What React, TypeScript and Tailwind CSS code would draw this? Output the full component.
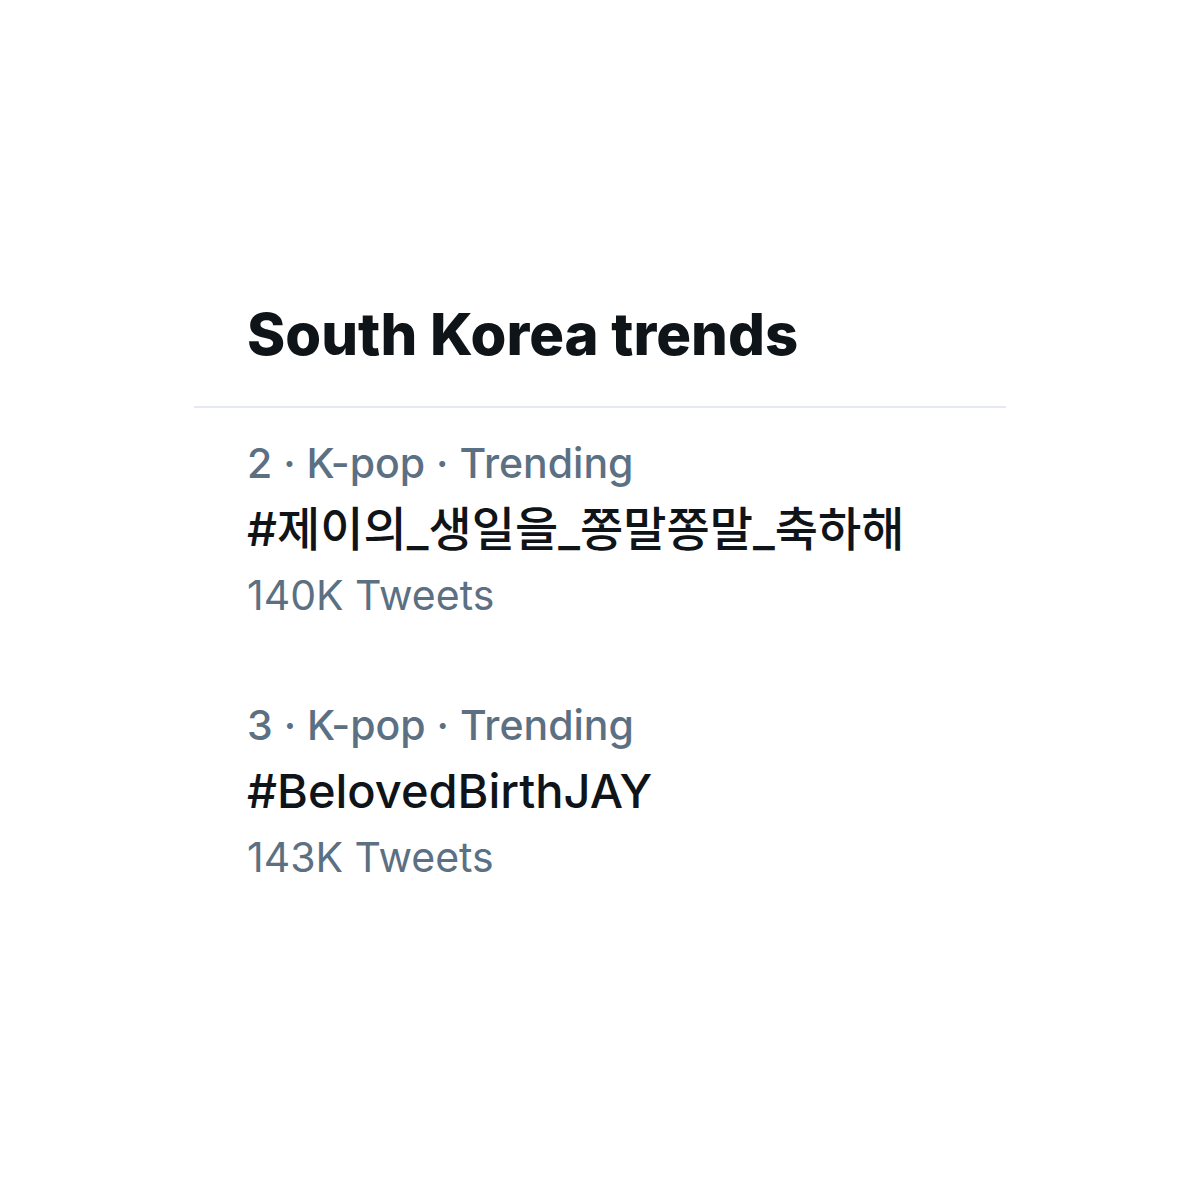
const trends = [
  { rank: 2, category: 'K-pop', tag: '#제이의_생일을_쫑말쫑말_축하해', count: '140K Tweets' },
  { rank: 3, category: 'K-pop', tag: '#BelovedBirthJAY', count: '143K Tweets' },
];

export default function App() {
  return (
    <div className="w-[1200px] h-[1200px] bg-white font-['Inter','Noto_Sans_CJK_KR',sans-serif]">
      <div className="pt-[300px] pl-[194px]">
        <h1 className="pl-[53px] text-[58px] leading-[68px] font-extrabold text-[#0f1419]">
          South Korea trends
        </h1>
        <div className="mt-[38px] w-[812px] h-[2px] bg-[#e4eaef]" />
        <div className="pl-[53px] pt-[22px] flex flex-col gap-[64px]">
          {trends.map((t) => (
            <div key={t.rank} className="flex flex-col">
              <div className="text-[41px] leading-[66px] font-medium text-[#5b7083]">
                {t.rank} · {t.category} · Trending
              </div>
              <div className="text-[47px] leading-[66px] font-medium text-[#0f1419]">{t.tag}</div>
              <div className="text-[41px] leading-[66px] text-[#5b7083]">{t.count}</div>
            </div>
          ))}
        </div>
      </div>
    </div>
  );
}
